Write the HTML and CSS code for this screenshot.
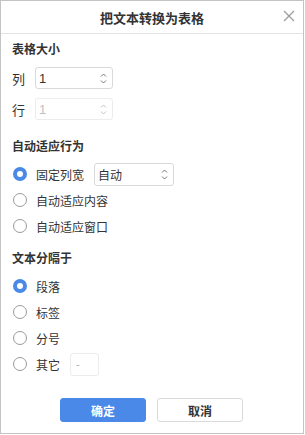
FILE: index.html
```
<!DOCTYPE html>
<html>
<head>
    <meta charset="UTF-8">
    <title>把文本转换为表格</title>
    <link rel="stylesheet" href="styles.css">
</head>
<body>
<div class="dialog">
    <div class="dialog-header">
        <span class="dialog-title">把文本转换为表格</span>
        <svg class="close" width="12" height="12" viewBox="0 0 12 12"><path d="M1 1L11 11M11 1L1 11" stroke="#9a9a9a" stroke-width="1.2" fill="none"/></svg>
    </div>
    <div class="dialog-body">
        <div class="section-title first">表格大小</div>
        <div class="size-row">
            <span class="size-label">列</span>
            <div class="spin">
                <span class="spin-value">1</span>
                <span class="arrows"><svg width="7" height="13" viewBox="0 0 7 13"><path d="M1 4.5L3.5 2L6 4.5M1 8.5L3.5 11L6 8.5" stroke="#777" stroke-width="1" fill="none"/></svg></span>
            </div>
        </div>
        <div class="size-row">
            <span class="size-label">行</span>
            <div class="spin disabled">
                <span class="spin-value">1</span>
                <span class="arrows"><svg width="7" height="13" viewBox="0 0 7 13"><path d="M1 4.5L3.5 2L6 4.5M1 8.5L3.5 11L6 8.5" stroke="#c4c4c4" stroke-width="1" fill="none"/></svg></span>
            </div>
        </div>

        <div class="section-title">自动适应行为</div>
        <div class="radio-row">
            <span class="radio checked"></span>
            <span class="radio-text">固定列宽</span>
            <div class="spin select">
                <span class="spin-value">自动</span>
                <span class="arrows"><svg width="7" height="13" viewBox="0 0 7 13"><path d="M1 4.5L3.5 2L6 4.5M1 8.5L3.5 11L6 8.5" stroke="#777" stroke-width="1" fill="none"/></svg></span>
            </div>
        </div>
        <div class="radio-row">
            <span class="radio"></span>
            <span class="radio-text">自动适应内容</span>
        </div>
        <div class="radio-row">
            <span class="radio"></span>
            <span class="radio-text">自动适应窗口</span>
        </div>

        <div class="section-title">文本分隔于</div>
        <div class="radio-row">
            <span class="radio checked"></span>
            <span class="radio-text">段落</span>
        </div>
        <div class="radio-row">
            <span class="radio"></span>
            <span class="radio-text">标签</span>
        </div>
        <div class="radio-row">
            <span class="radio"></span>
            <span class="radio-text">分号</span>
        </div>
        <div class="radio-row">
            <span class="radio"></span>
            <span class="radio-text">其它</span>
            <div class="other-input">-</div>
        </div>
    </div>
    <div class="dialog-footer">
        <button class="btn btn-primary">确定</button>
        <button class="btn">取消</button>
    </div>
</div>
</body>
</html>
```

FILE: styles.css
```
body {
    margin: 0;
    font-family: "Liberation Sans", "Noto Sans CJK SC", sans-serif;
    font-size: 12px;
    color: #333;
    background: #fff;
}
.dialog {
    width: 304px;
    height: 434px;
    box-sizing: border-box;
    border: 1px solid #c4c4c4;
    display: flex;
    flex-direction: column;
}
.dialog-header {
    position: relative;
    height: 32px;
    border-bottom: 1px solid #e3e3e3;
    display: flex;
    align-items: center;
    justify-content: center;
}
.dialog-title {
    font-size: 13px;
    font-weight: bold;
    color: #333;
}
.close {
    position: absolute;
    right: 8px;
    top: 9px;
}
.dialog-body {
    padding: 0 11px;
}
.section-title {
    font-weight: bold;
    line-height: 18px;
    margin-top: 11px;
    margin-bottom: 5px;
}
.section-title.first {
    margin-top: 7px;
    margin-bottom: 8px;
}
.size-row + .section-title {
    margin-top: 18px;
}
.size-row {
    display: flex;
    align-items: center;
    margin-bottom: 9px;
}
.size-label {
    width: 12px;
    margin-right: 11px;
    font-size: 13px;
}
.spin {
    width: 78px;
    height: 22px;
    box-sizing: border-box;
    border: 1px solid #d9d9d9;
    border-radius: 3px;
    display: flex;
    align-items: center;
    justify-content: space-between;
    padding: 0 5px 0 3px;
}
.spin-value {
    font-size: 13px;
}
.arrows {
    display: flex;
}
.spin.disabled {
    border-color: #ececec;
}
.spin.disabled .spin-value {
    color: #c0c0c0;
}
.spin.select {
    width: 80px;
    height: 23px;
    margin-left: 10px;
}
.spin.select .spin-value {
    font-size: 12px;
}
.radio-row {
    display: flex;
    align-items: center;
    height: 26px;
}
.radio {
    width: 14px;
    height: 14px;
    box-sizing: border-box;
    border: 1px solid #9a9a9a;
    border-radius: 50%;
    margin-left: 1px;
    margin-right: 9px;
}
.radio.checked {
    border: 4px solid #4a89e8;
    background: #fff;
}
.other-input {
    width: 29px;
    height: 23px;
    box-sizing: border-box;
    border: 1px solid #ececec;
    border-radius: 3px;
    margin-left: 10px;
    color: #aaa;
    font-size: 11px;
    line-height: 21px;
    padding-left: 5px;
}
.dialog-footer {
    display: flex;
    justify-content: center;
    gap: 11px;
    margin-top: 21px;
    padding-right: 1px;
}
.btn {
    width: 86px;
    height: 24px;
    border: 1px solid #dadada;
    border-radius: 3px;
    background: #fff;
    font-family: "Liberation Sans", "Noto Sans CJK SC", sans-serif;
    font-size: 12px;
    font-weight: bold;
    color: #333;
    padding: 0;
}
.btn-primary {
    background: #4a89e8;
    border-color: #4a89e8;
    color: #fff;
}
```
